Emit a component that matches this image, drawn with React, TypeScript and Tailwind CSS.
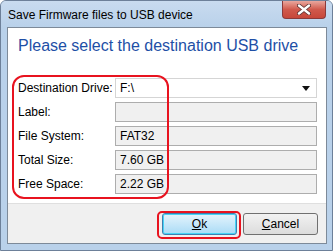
const rows = [
  { label: 'Label:', value: '' },
  { label: 'File System:', value: 'FAT32' },
  { label: 'Total Size:', value: '7.60 GB' },
  { label: 'Free Space:', value: '2.22 GB' },
];

export default function App() {
  return (
    <div
      className="relative w-[333px] h-[251px] bg-[#b9d1ea] border border-[#6d8099] rounded-t-[6px] overflow-hidden text-black"
      style={{ fontFamily: '"Liberation Sans", Arial, sans-serif' }}
    >
      {/* Title bar */}
      <div className="h-[26px] flex items-center pl-[7px] pt-[2px] bg-gradient-to-b from-[#c9dbef] to-[#b9d1ea]">
        <span className="text-[12px] leading-none">Save Firmware files to USB device</span>
      </div>

      {/* Close button */}
      <div className="absolute left-[281px] top-0 w-[44px] h-[18px] rounded-b-[4px] border border-t-0 border-[#8b3a3a] bg-gradient-to-b from-[#e8a79e] via-[#d0594c] to-[#c7473a] flex items-center justify-center">
        <svg width="14" height="11" viewBox="0 0 14 11">
          <path d="M2 1.5 L12 9.5 M12 1.5 L2 9.5" stroke="#5a3030" strokeWidth="4" strokeLinecap="round" />
          <path d="M2 1.5 L12 9.5 M12 1.5 L2 9.5" stroke="#ffffff" strokeWidth="2.4" strokeLinecap="round" />
        </svg>
      </div>

      {/* Client area */}
      <div className="ml-[6px] w-[320px] h-[217px] border border-[#7d8a99] flex flex-col bg-white">
        <div className="h-[175px] flex flex-col">
          <div className="pl-[10px] pt-[8px] text-[16px] leading-[20px] text-[#1e4fa6]">
            Please select the destination USB drive
          </div>

          <div className="mt-[22px] flex flex-col gap-[4px] pl-[10px] text-[12px]">
            <div className="flex items-center h-[20px]">
              <span className="w-[97px] whitespace-nowrap">Destination Drive:</span>
              <div className="w-[202px] h-[20px] border border-[#d5d5d5] bg-white flex items-center justify-between pl-[4px] pr-[6px]">
                <span>F:\</span>
                <svg width="8" height="5" viewBox="0 0 8 5">
                  <path d="M0 0 H8 L4 5 Z" fill="#111" />
                </svg>
              </div>
            </div>
            {rows.map((r) => (
              <div key={r.label} className="flex items-center h-[20px]">
                <span className="w-[97px] whitespace-nowrap">{r.label}</span>
                <div className="w-[202px] h-[20px] border border-[#adadad] bg-[#f0f0f0] flex items-center pl-[4px]">
                  {r.value}
                </div>
              </div>
            ))}
          </div>
        </div>

        {/* Button strip */}
        <div className="flex-1 bg-[#f0f0f0] border-t border-[#dfdfdf] flex items-start justify-end gap-[6px] pt-[9px] pr-[8px] text-[12px]">
          <button className="w-[75px] h-[22px] rounded-[3px] border border-[#3c7fb1] bg-gradient-to-b from-[#e5f4fc] to-[#a9dbf6] shadow-[inset_0_0_0_1px_#48d3f5] flex items-center justify-center">
            <span><span className="underline">O</span>k</span>
          </button>
          <button className="w-[75px] h-[22px] rounded-[3px] border border-[#707070] bg-gradient-to-b from-[#f2f2f2] to-[#dcdcdc] flex items-center justify-center">
            <span><span className="underline">C</span>ancel</span>
          </button>
        </div>
      </div>

      {/* Annotations */}
      <div className="absolute left-[11px] top-[74px] w-[157px] h-[124px] border-2 border-[#e8131f] rounded-[12px] pointer-events-none" />
      <div className="absolute left-[156px] top-[210px] w-[84px] h-[28px] border-2 border-[#e8131f] rounded-[5px] pointer-events-none" />
    </div>
  );
}
